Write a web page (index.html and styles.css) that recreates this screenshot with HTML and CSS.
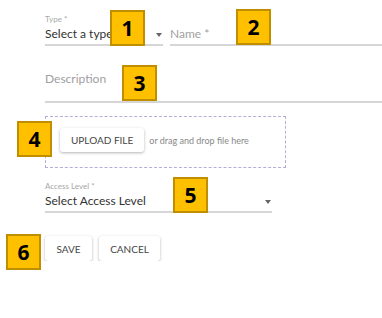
FILE: index.html
```html
<!DOCTYPE html>
<html lang="en">
<head>
    <meta charset="UTF-8">
    <meta name="viewport" content="width=device-width, initial-scale=1.0">
    <title>New Document</title>
    <link rel="stylesheet" href="styles.css">
</head>
<body>
    <div class="doc-form">
        <div class="row">
            <div class="field field-type">
                <div class="field-label">Type *</div>
                <div class="field-value">Select a type <span class="caret"></span></div>
            </div>
            <div class="field field-name">
                <div class="field-value placeholder">Name *</div>
            </div>
        </div>

        <div class="field field-desc">
            <div class="field-value placeholder">Description</div>
        </div>

        <div class="upload-box">
            <button type="button" class="btn">UPLOAD FILE</button>
            <span class="upload-hint">or drag and drop file here</span>
        </div>

        <div class="field field-access">
            <div class="field-label">Access Level *</div>
            <div class="field-value">Select Access Level <span class="caret"></span></div>
        </div>

        <div class="actions">
            <button type="button" class="btn btn-save">SAVE</button>
            <button type="button" class="btn btn-cancel">CANCEL</button>
        </div>
    </div>

    <div class="badge badge-1">1</div>
    <div class="badge badge-2">2</div>
    <div class="badge badge-3">3</div>
    <div class="badge badge-4">4</div>
    <div class="badge badge-5">5</div>
    <div class="badge badge-6">6</div>
</body>
</html>
```

FILE: styles.css
```css
body {
    font-family: Lato, "Open Sans", sans-serif;
    margin: 0;
    padding: 0;
    background: #fff;
    color: #333;
}
.doc-form {
    padding: 14px 0 0 45px;
}
.row {
    display: flex;
    align-items: flex-end;
    gap: 7px;
}
.field {
    border-bottom: 2px solid #d6d6d6;
}
.field-type {
    width: 118px;
}
.field-name {
    flex: 1;
}
.field-label {
    font-size: 8px;
    line-height: 10px;
    color: #a8a8a8;
}
.field-value {
    position: relative;
    font-size: 12px;
    line-height: 16px;
    padding: 2px 0 2px;
    color: #333;
}
.placeholder {
    color: #a0a0a0;
}
.caret {
    position: absolute;
    right: 1px;
    top: 9px;
    width: 0;
    height: 0;
    border-left: 3.5px solid transparent;
    border-right: 3.5px solid transparent;
    border-top: 4px solid #666;
}
.field-desc {
    margin-top: 23px;
}
.field-desc .field-value {
    padding-bottom: 14px;
}
.upload-box {
    box-sizing: border-box;
    margin-top: 13px;
    width: 241px;
    height: 52px;
    border: 1px dashed #b4aed6;
    display: flex;
    align-items: center;
    padding-left: 14px;
    padding-bottom: 4px;
    gap: 5px;
}
.btn {
    font-family: Lato, "Open Sans", sans-serif;
    font-size: 10px;
    color: #444;
    background: #fff;
    border: none;
    border-radius: 3px;
    box-shadow: 0 1px 3px rgba(0, 0, 0, 0.3);
    height: 24px;
    padding: 0 11px;
    cursor: pointer;
}
.upload-hint {
    font-size: 9px;
    color: #888;
}
.field-access {
    margin-top: 13px;
    width: 227px;
}
.actions {
    display: flex;
    gap: 7px;
    margin-top: 23px;
}
.btn-save {
    width: 47px;
    height: 25px;
    padding: 0;
}
.btn-cancel {
    width: 61px;
    height: 25px;
    padding: 0;
}
.badge {
    position: absolute;
    box-sizing: border-box;
    width: 35px;
    height: 36px;
    background: #ffc000;
    border: 2px solid #bf8f00;
    font-family: "Open Sans", sans-serif;
    font-weight: bold;
    font-size: 21px;
    color: #000;
    display: flex;
    align-items: center;
    justify-content: center;
}
.badge-1 { left: 110px; top: 10px; }
.badge-2 { left: 236px; top: 9px; }
.badge-3 { left: 122px; top: 65px; }
.badge-4 { left: 17px; top: 121px; }
.badge-5 { left: 173px; top: 177px; }
.badge-6 { left: 6px; top: 234px; }
```
